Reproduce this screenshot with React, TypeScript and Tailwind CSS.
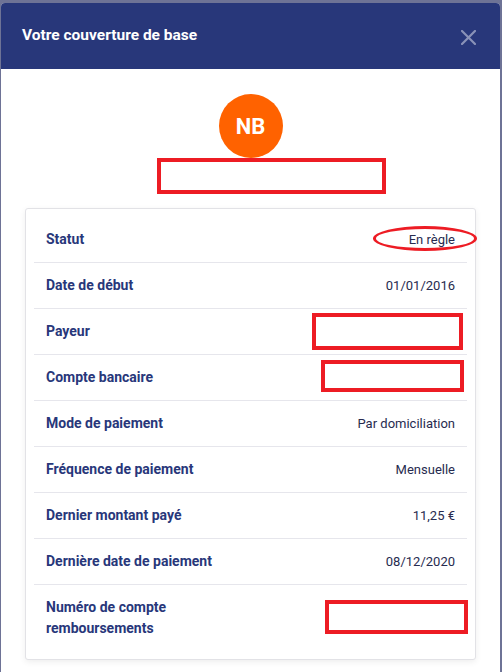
import React from "react";

const rows: { label: React.ReactNode; value?: string }[] = [
  { label: "Statut", value: "En règle" },
  { label: "Date de début", value: "01/01/2016" },
  { label: "Payeur" },
  { label: "Compte bancaire" },
  { label: "Mode de paiement", value: "Par domiciliation" },
  { label: "Fréquence de paiement", value: "Mensuelle" },
  { label: "Dernier montant payé", value: "11,25 €" },
  { label: "Dernière date de paiement", value: "08/12/2020" },
  {
    label: (
      <>
        Numéro de compte
        <br />
        remboursements
      </>
    ),
  },
];

export default function App() {
  return (
    <div
      className="h-[672px] w-[502px] overflow-hidden bg-[#6e7396] pt-[3px] pl-[1px] pr-[2px]"
      style={{ fontFamily: "Roboto, 'Liberation Sans', sans-serif" }}
    >
      <div className="h-full rounded-t-[4px] bg-white overflow-hidden">
        {/* Header */}
        <div className="flex h-[66px] items-center justify-between bg-[#28377a] pl-[21px] pr-[24px]">
          <div className="text-[15.5px] font-bold leading-none text-white">
            Votre couverture de base
          </div>
          <svg width="15" height="15" viewBox="0 0 15 15" className="mt-[2px]">
            <path
              d="M1 1 L14 14 M14 1 L1 14"
              stroke="#8a92b8"
              strokeWidth="2.2"
              strokeLinecap="square"
              fill="none"
            />
          </svg>
        </div>

        {/* Body */}
        <div className="px-[24px] pt-[25px]">
          <div className="flex flex-col items-center">
            <div className="flex h-[64px] w-[64px] items-center justify-center rounded-full bg-[#ff6200] text-[22px] font-bold text-white">
              NB
            </div>
            <div className="relative h-[36px] w-full">
              <div className="absolute left-[132px] top-0 h-[36px] w-[229px] border-[4.5px] border-[#ed1c24]" />
            </div>
          </div>

          <div className="mt-[14px] rounded-[3px] border border-[#e2e2e6] bg-white p-2 shadow-[0_2px_6px_rgba(0,0,0,0.07)]">
            {rows.map((r, i) => (
              <div
                key={i}
                className={`relative flex items-center justify-between px-3 py-3 leading-[21px] ${
                  i < rows.length - 1 ? "border-b border-[#e6e6ec]" : ""
                }`}
              >
                <div className="text-[14px] font-bold text-[#28377a]">{r.label}</div>
                <div className="text-[13px] text-[#272b4f]">{r.value ?? ""}</div>
                {i === 0 && (
                  <div className="absolute left-[339px] top-[9px] h-[25px] w-[104px] rounded-[50%] border-[3.5px] border-[#ed1c24]" />
                )}
                {i === 2 && (
                  <div className="absolute left-[278px] top-[4px] h-[37px] w-[151px] border-[4.5px] border-[#ed1c24]" />
                )}
                {i === 3 && (
                  <div className="absolute left-[287px] top-[5px] h-[32px] w-[143px] border-[4.5px] border-[#ed1c24]" />
                )}
                {i === 8 && (
                  <div className="absolute left-[291px] top-[15px] h-[34px] w-[143px] border-[4.5px] border-[#ed1c24]" />
                )}
              </div>
            ))}
          </div>
        </div>
      </div>
    </div>
  );
}
